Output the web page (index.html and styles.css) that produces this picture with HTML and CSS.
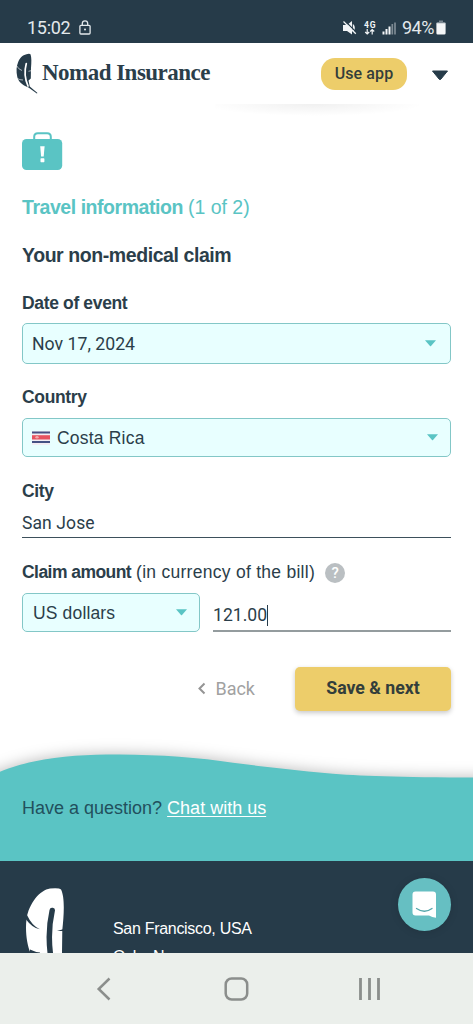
FILE: index.html
```html
<!DOCTYPE html>
<html lang="en">
<head>
<meta charset="utf-8">
<meta name="viewport" content="width=device-width, initial-scale=1">
<title>Nomad Insurance</title>
<link rel="stylesheet" href="styles.css">
</head>
<body>
<div class="screen">
  <div class="status">
    <span class="time">15:02</span>
    <svg class="lock" width="12" height="15" viewBox="0 0 12 15" fill="none" stroke="#e3e9ec" stroke-width="1.3"><rect x=".9" y="5.3" width="10.2" height="8.7" rx="1"/><path d="M3.3 5.3V3.5a2.7 2.7 0 0 1 5.4 0v1.8"/><circle cx="6" cy="9.6" r="1" fill="#e3e9ec" stroke="none"/></svg>
    <svg class="indicators" width="54" height="18" viewBox="0 0 54 18">
      <path d="M1 6h4l5-4v13.500L5 12H1z" fill="#f2f5f7"/><path d="M10.800 5v8c1.500-1 2-2.300 2-4s-.5-3-2-4z" fill="#f2f5f7"/>
      <path d="M2.500 1.500L15 14" stroke="#263b49" stroke-width="1.300"/><path d="M1.500 2.500l12.300 12.300" stroke="#f2f5f7" stroke-width="1.300"/>
      <text class="network" x="22" y="9" textLength="11.500">4G</text>
      <path d="M25.200 10v5M23.200 13l2 2 2-2M30.200 15.500v-5M28.200 12.500l2-2 2 2" fill="none" stroke="#f2f5f7" stroke-width="1.200"/>
      <path d="M41.500 15.500v-3M44.500 15.500v-5.500M47.500 15.500v-8" stroke="#f2f5f7" stroke-width="2"/><path d="M50.300 15.500v-10.500M53 15.500v-12" stroke="#7d8a93" stroke-width="1.700"/>
    </svg>
    <span class="percent">94%</span>
    <svg class="battery" width="10" height="15" viewBox="0 0 10 15"><path d="M3 .5h4v1.500h1.500q1 0 1 1V4h-9V3q0-1 1-1H3z" fill="#798690"/><path d="M.4 3.200h9.200v10q0 1.300-1.300 1.300H1.700q-1.300 0-1.300-1.300z" fill="#f4f6f7"/></svg>
  </div>

  <header class="header">
    <svg class="feather" width="23" height="41" viewBox="0 0 23 41">
      <path d="M10.500 1.200Q14 .4 14.600 1.500C15.600 5 15.500 9 15 15L14.800 25.500 12.500 27.500 13.800 33.500 21.500 40 20.800 40.600 12.500 34.500C6 32 2.500 28.500 1.300 24 0 18 .5 13 2 9.500 3.500 5 6.500 2 10.500 1.200z" fill="#263b49"/>
      <path d="M10.300 10.500C8.500 17 8.500 25 12 33" fill="none" stroke="#fff" stroke-width="1.700" stroke-linecap="round"/>
      <path d="M.5 12.500q2 4 5.500 5M1.500 25.500q2 1.500 5.500 1.500M12.500 18.300l3.500-.8" fill="none" stroke="#fff" stroke-width=".6"/>
    </svg>
    <span class="brand">Nomad Insurance</span>
    <button class="use-app">Use app</button>
    <svg class="menu-arrow" width="18" height="11" viewBox="0 0 18 11"><path d="M1.500 1h15L10 9q-1 1.200-2 0z" fill="#263b49" stroke="#263b49" stroke-linejoin="round"/></svg>
    <i class="header-shadow"></i>
  </header>

  <main class="form">
    <svg class="case" width="41" height="39" viewBox="0 0 41 39"><rect y="7" width="40.200" height="31" rx="4.500" fill="#5ac4c4"/><path d="M12.200 8V4.800q0-3.600 3.600-3.600h9.400q3.600 0 3.600 3.600V8" fill="none" stroke="#5ac4c4" stroke-width="2"/><path d="M18.200 14.200h4.400l-.9 10.200h-2.600z" fill="#fff"/><rect x="18.500" y="26.300" width="3.900" height="3.900" rx=".6" fill="#fff"/></svg>
    <h1 class="title"><span class="title-name">Travel information</span> <span class="title-step">(1 of 2)</span></h1>
    <h2 class="subtitle">Your non-medical claim</h2>

    <label class="label label-date">Date of event</label>
    <div class="select select-date"><span class="date-value">Nov 17, 2024</span><svg class="caret" width="11" height="7" viewBox="0 0 11 7"><path d="M0 .3h11L6 6q-.5.500-1 0z"/></svg></div>

    <label class="label label-country">Country</label>
    <div class="select select-country">
      <svg class="flag" width="18" height="14" viewBox="0 0 18 14"><path fill="#f2edf3" d="M0 0h18v14H0z"/><path fill="#455184" d="M0 .5h18v2H0zM0 10h18v2H0z"/><path fill="#e65360" d="M0 4.200h18v4.300H0z"/><ellipse cx="5" cy="6.300" rx="1.700" ry="1.300" fill="#f1a9a9"/></svg>
      <span class="country-value">Costa Rica</span><svg class="caret" width="11" height="7" viewBox="0 0 11 7"><path d="M0 .3h11L6 6q-.5.500-1 0z"/></svg>
    </div>

    <label class="label label-city">City</label>
    <div class="input input-city"><span class="city-value">San Jose</span></div>

    <div class="label label-amount"><span class="amount-name">Claim amount</span><span class="amount-note">(in currency of the bill)</span><span class="help">?</span></div>
    <div class="amount-row">
      <div class="select select-currency"><span class="currency-value">US dollars</span><svg class="caret" width="11" height="7" viewBox="0 0 11 7"><path d="M0 .3h11L6 6q-.5.500-1 0z"/></svg></div>
      <div class="input input-amount"><span class="amount-value">121.00</span><i class="cursor"></i></div>
    </div>

    <div class="actions">
      <a class="back"><svg width="9" height="13" viewBox="0 0 9 13"><path d="M7.500 1.500l-5 5 5 5" fill="none" stroke="#949494" stroke-width="2"/></svg><span class="back-text">Back</span></a>
      <button class="save"><span class="save-text">Save &amp; next</span></button>
    </div>
  </main>

  <section class="question">
    <svg class="wave" width="473" height="46" viewBox="0 0 473 46"><path d="M-40 60L-40 54Q-25 43 0 36.700C12 32 20 29.500 34 26.500C62 20.500 92 19.500 120 19.600C160 19.700 200 23 233 27.700C267 32 300 36 333 38.800C370 41.500 410 42.700 513 42.700V60z"/></svg>
    <p class="question-line"><span class="question-text">Have a question?</span><a class="chat-link">Chat with us</a></p>
  </section>

  <footer class="footer">
    <svg class="footer-feather" width="38" height="66" viewBox="0 0 38 66"><path d="M24 .500Q33-.500 35 1.500C39 9 38 27 36.300 42L36 66H5C1 58-1 44 .5 31C3 15 14 2 24 .500z" fill="#fff"/><path d="M26.200 22.500C22.700 38 22.500 52 24.500 67" fill="none" stroke="#263b49" stroke-width="5.500" stroke-linecap="round"/><path d="M1 27q5 11 13 14.300Q6 40-1 30zM31 43l7-2v2zM4 61.500q5 2.500 10 3V68H4z" fill="#263b49"/></svg>
    <address class="places"><span class="place-sf">San Francisco, USA</span><span class="place-oslo">Oslo, Norway</span></address>
    <div class="chat"><svg width="25" height="28" viewBox="0 0 25 28"><path d="M3.500.500h17.500q3 0 3 3v23.200Q20 26.500 17 24.500H3.500q-3 0-3-3v-18q0-3 3-3z" fill="#fff"/><path d="M4.500 17.500q8 5.500 15.500 0" fill="none" stroke="#55a7ab" stroke-width="1.300" stroke-linecap="round"/></svg></div>
  </footer>

  <nav class="nav">
    <svg width="473" height="71" viewBox="0 0 473 71" fill="none" stroke="#8b8e8c" stroke-width="2.500"><path d="M109.500 25.500L98.700 36l10.800 10.500"/><rect x="225.700" y="25.500" width="21.500" height="21" rx="6"/><path d="M360.500 25v22M369.500 25v22M378.500 25v22" stroke-width="2.800"/></svg>
  </nav>
</div>
</body>
</html>
```
FILE: styles.css
```css
* { box-sizing: border-box; }
body { margin: 0; background: #fff; color: #2b3e4a; font-family: "Liberation Sans", Arial, sans-serif; }
.screen { display: flex; flex-direction: column; width: 473px; height: 1024px; overflow: hidden; }
.screen span { white-space: nowrap; }
svg { flex: none; display: block; }

.status { height: 43px; flex: none; background: #263b49; display: flex; align-items: center; padding: 12px 27px 0 27px; color: #e3e9ec; font-family: Roboto, sans-serif; font-size: 18px; }
.time { width: 43px; letter-spacing: -.3px; }
.lock { margin-left: 9px; }
.indicators { margin-left: auto; }
.network { font: 700 8.500px Roboto, sans-serif; fill: #f2f5f7; }
.percent { width: 33px; margin-left: 6px; letter-spacing: -.5px; }
.battery { margin-left: 1px; }

.header { height: 61px; flex: none; position: relative; display: flex; align-items: center; padding: 0 25px 0 16px; background: #fff; }
.feather { margin-top: -1px; }
.brand { font: 700 23px/30px "Liberation Serif", serif; letter-spacing: -.52px; margin-left: 3px; margin-top: -2px; }
.use-app { margin-left: auto; width: 86px; height: 32px; border: 0; border-radius: 14px; background: #edcd6a; color: #333e3b; font: 500 16px Roboto, sans-serif; letter-spacing: .1px; padding: 0; }
.menu-arrow { margin-left: 24px; width: 18px; margin-top: 3px; margin-right: -1px; }
.header-shadow { position: absolute; left: 215px; top: 61px; width: 220px; height: 12px; background: radial-gradient(ellipse 50% 100% at 45% 0, rgba(0,0,0,.06), transparent); }

.form { padding: 0 22px; display: flex; flex-direction: column; flex: none; }
.case { margin-top: 28px; }
.title { margin: 24px 0 0; font-size: 19.5px; line-height: 24px; color: #5ac4c4; display: flex; gap: 5px; }
.title-name { letter-spacing: -.45px; }
.title-step { font-weight: 400; }
.subtitle { margin: 24px 0 0; font-size: 19.5px; line-height: 24px; letter-spacing: -.42px; }
.label { font-size: 17.5px; line-height: 20px; font-weight: 700; letter-spacing: -.35px; }
.label-date { margin-top: 26px; }
.label-country { margin-top: 23px; }
.label-city { margin-top: 24px; }
.label-amount { margin-top: 23px; display: flex; align-items: center; }
.amount-name { letter-spacing: -.55px; }
.amount-note { font-weight: 400; margin-left: 5px; letter-spacing: .27px; }
.help { width: 20px; height: 20px; border-radius: 50%; background: #babfc2; color: #fff; font: 500 15px/20px Roboto, sans-serif; text-align: center; margin-left: 10px; margin-top: 2px; }
.select { height: 39px; background: #e8ffff; border: 1px solid #83c7c7; border-radius: 5px; display: flex; align-items: center; font-size: 17.5px; line-height: 20px; padding: 0 12px 0 9px; }
.caret { margin-left: auto; fill: #5ac4c4; }
.select-date { margin-top: 10px; height: 41px; padding-right: 14px; font-family: Roboto, sans-serif; font-size: 17.7px; }
.select-country { margin-top: 11px; }
.country-value { margin: 1px 0 0 7px; letter-spacing: .2px; }
.input { border-bottom: 1px solid #3d505b; font: 17.5px/20px Roboto, sans-serif; }
.input-city { margin-top: 12px; height: 25px; }
.city-value { letter-spacing: .1px; }
.amount-row { display: flex; gap: 13px; margin-top: 10px; }
.select-currency { width: 178px; padding-left: 10px; letter-spacing: .15px; }
.input-amount { flex: 1; height: 39px; padding-top: 12px; border-bottom: 2px solid #949c9e; display: flex; font-size: 17.6px; }
.cursor { width: 1px; height: 21px; background: #263b49; }
.actions { display: flex; justify-content: flex-end; align-items: center; margin-top: 35px; gap: 40px; }
.back { display: flex; align-items: center; gap: 9px; margin-top: -1px; color: #a1a1a1; font: 18px/22px Roboto, sans-serif; }
.save { width: 156px; height: 44px; border: 0; border-radius: 5px; background: #edcd6a; color: #333e3b; font: 700 17.7px Roboto, sans-serif; padding: 0 0 2px; box-shadow: 0 2px 5px rgba(0,0,0,.22); }

.question { flex: none; margin-top: 24px; height: 126px; }
.wave { fill: #5ac4c4; overflow: visible; filter: drop-shadow(0 -1px 7px rgba(0,0,0,.25)); }
.question-line { position: relative; margin: 0; height: 80px; padding: 16px 22px 0; background: #5ac4c4; display: flex; gap: 5px; font-size: 18px; line-height: 22px; color: #22505d; }
.chat-link { color: #fff; text-decoration: underline; text-underline-offset: 2px; white-space: nowrap; }

.footer { height: 92px; flex: none; background: #263b49; color: #fff; display: flex; padding: 0 22px 0 26px; overflow: hidden; }
.footer-feather { margin-top: 27px; }
.places { display: flex; flex-direction: column; margin: 56px 0 0 49px; font-style: normal; font-size: 16px; line-height: 24px; gap: 4px; letter-spacing: -.3px; }
.chat { margin: 17px 0 0 auto; width: 53px; height: 53px; border-radius: 50%; background: #66bfc2; display: flex; align-items: center; justify-content: center; box-shadow: 0 1px 8px rgba(0,0,0,.12); }
.nav { flex: none; height: 71px; background: #ebefeb; }
```
